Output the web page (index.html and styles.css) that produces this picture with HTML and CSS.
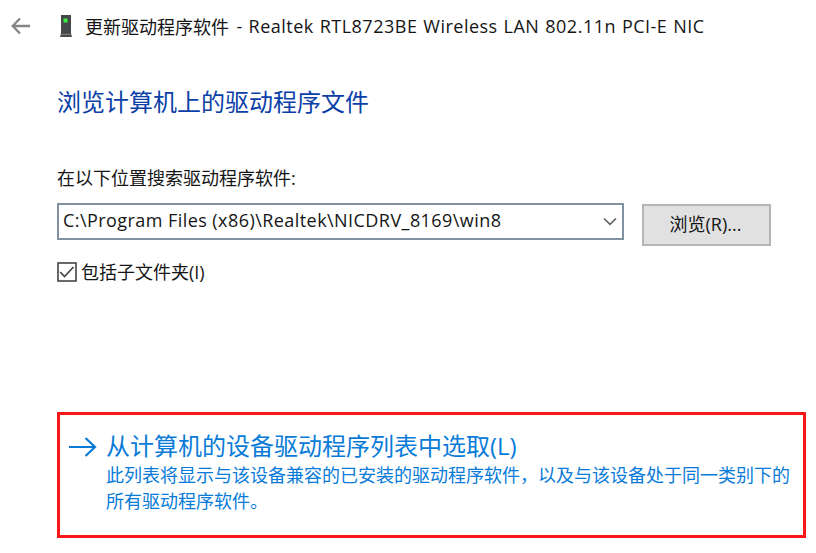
FILE: index.html
```html
<!DOCTYPE html>
<html lang="zh-CN">
<head>
<meta charset="utf-8">
<title>更新驱动程序软件</title>
<link rel="stylesheet" href="styles.css">
</head>
<body>
<header class="titlebar">
  <svg class="back" width="20" height="18" viewBox="0 0 20 18"><path d="M19 9H2M9 1.5L1.7 9L9 16.5" fill="none" stroke="#858585" stroke-width="2.3"/></svg>
  <svg class="device" width="12" height="22" viewBox="0 0 12 22"><path d="M1 0H11V19L12 22H0L1 19Z" fill="#454749"/><path d="M0 19.3H12" stroke="#999" stroke-width=".8"/><rect x="3.5" y="3.5" width="4" height="4" fill="#35ef43"/></svg>
  <span>更新驱动程序软件</span><span class="latin device-name"> - Realtek RTL8723BE Wireless LAN 802.11n PCI-E NIC</span>
</header>
<main>
  <h1>浏览计算机上的驱动程序文件</h1>
  <p class="label">在以下位置搜索驱动程序软件<span class="latin">:</span></p>
  <div class="row">
    <div class="combo"><span class="latin path">C:\Program Files (x86)\Realtek\NICDRV_8169\win8</span>
      <svg width="14" height="9" viewBox="0 0 14 9"><path d="M1 1.5L7 7.3L13 1.5" fill="none" stroke="#606060" stroke-width="1.6"/></svg>
    </div>
    <button>浏览<span class="latin">(R)...</span></button>
  </div>
  <div class="check">
    <svg width="20" height="20" viewBox="0 0 20 20"><rect x="1" y="1" width="18" height="18" fill="#fff" stroke="#444" stroke-width="1.6"/><path d="M3.2 10L7.5 14.5L16.5 5" fill="none" stroke="#444" stroke-width="1.7"/></svg>
    <span class="check-text">包括子文件夹<span class="latin">(I)</span></span>
  </div>
  <section class="command">
    <svg width="28" height="20" viewBox="0 0 28 20"><path d="M0 10H26M16.5 1L26 10L16.5 19" fill="none" stroke="#087bd8" stroke-width="2.2"/></svg>
    <div>
      <h2>从计算机的设备驱动程序列表中选取<span class="latin">(L)</span></h2>
      <p>此列表将显示与该设备兼容的已安装的驱动程序软件，以及与该设备处于同一类别下的<br>所有驱动程序软件。</p>
    </div>
  </section>
</main>
</body>
</html>
```
FILE: styles.css
```css
* { box-sizing: border-box; }
body { margin: 0; background: #fff; color: #151515; font: 18px/26px "Noto Sans CJK SC", sans-serif; white-space: nowrap; }
h1, h2, p { margin: 0; font-weight: 400; }
.latin { font-family: "Open Sans", "Noto Sans CJK SC", sans-serif; }
svg { flex: none; }
.titlebar { display: flex; align-items: center; height: 52px; padding-left: 11px; }
.back { margin-right: 29px; }
.device { margin-right: 13px; }
.device-name { white-space: pre; letter-spacing: 0.5px; word-spacing: 0.7px; padding-left: 1.5px; }
.path { letter-spacing: 0.44px; }
main { padding-left: 57px; }
h1 { margin-top: 32px; font-size: 24px; line-height: 34px; color: #0b3fa8; }
.label { margin-top: 46px; }
.row { display: flex; margin-top: 12px; }
.combo { display: flex; justify-content: space-between; align-items: center; width: 567px; height: 37px; padding: 0 5px 4px 4px; border: 2px solid #8092a2; }
.combo svg { margin-top: 4px; }
button { width: 129px; height: 42px; margin: 1px 0 0 18px; padding: 0 2px 4px 0; border: 2px solid #b5b5b5; background: #e1e1e1; color: #151515; font: inherit; }
.check { display: flex; align-items: center; gap: 4px; height: 26px; margin-top: 13px; }
.check-text { padding-bottom: 1px; }
.command { display: flex; width: 749px; height: 126px; margin-top: 127px; padding: 14px 0 0 9px; border: 3px solid #fb1717; color: #087bd8; }
.command > svg { margin: 8px 9px 0 0; }
h2 { font-size: 24px; line-height: 32px; }
.command p { margin-top: -1px; line-height: 26px; }
```
